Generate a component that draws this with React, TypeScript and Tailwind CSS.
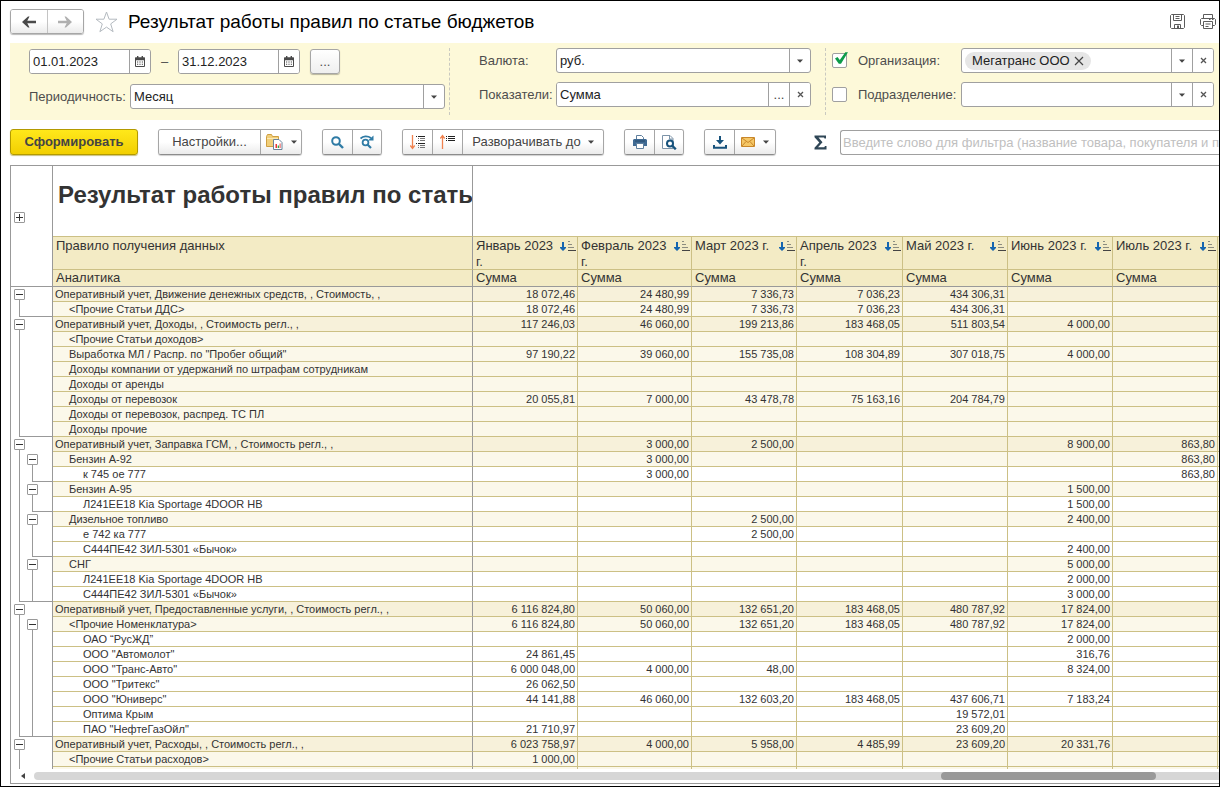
import React, { useState } from "react";

type Row = { level: 0 | 1 | 2; label: string; values: string[] };

const months = [
  "Январь 2023 г.",
  "Февраль 2023 г.",
  "Март 2023 г.",
  "Апрель 2023 г.",
  "Май 2023 г.",
  "Июнь 2023 г.",
  "Июль 2023 г.",
];

const rows: Row[] = [
  { level: 0, label: "Оперативный учет, Движение денежных средств, , Стоимость, ,", values: ["18 072,46", "24 480,99", "7 336,73", "7 036,23", "434 306,31", "", ""] },
  { level: 1, label: "<Прочие Статьи ДДС>", values: ["18 072,46", "24 480,99", "7 336,73", "7 036,23", "434 306,31", "", ""] },
  { level: 0, label: "Оперативный учет, Доходы, , Стоимость регл., ,", values: ["117 246,03", "46 060,00", "199 213,86", "183 468,05", "511 803,54", "4 000,00", ""] },
  { level: 1, label: "<Прочие Статьи доходов>", values: ["", "", "", "", "", "", ""] },
  { level: 1, label: 'Выработка МЛ / Распр. по "Пробег общий"', values: ["97 190,22", "39 060,00", "155 735,08", "108 304,89", "307 018,75", "4 000,00", ""] },
  { level: 1, label: "Доходы компании от удержаний по штрафам сотрудникам", values: ["", "", "", "", "", "", ""] },
  { level: 1, label: "Доходы от аренды", values: ["", "", "", "", "", "", ""] },
  { level: 1, label: "Доходы от перевозок", values: ["20 055,81", "7 000,00", "43 478,78", "75 163,16", "204 784,79", "", ""] },
  { level: 1, label: "Доходы от перевозок, распред. ТС ПЛ", values: ["", "", "", "", "", "", ""] },
  { level: 1, label: "Доходы прочие", values: ["", "", "", "", "", "", ""] },
  { level: 0, label: "Оперативный учет, Заправка ГСМ, , Стоимость регл., ,", values: ["", "3 000,00", "2 500,00", "", "", "8 900,00", "863,80"] },
  { level: 1, label: "Бензин А-92", values: ["", "3 000,00", "", "", "", "", "863,80"] },
  { level: 2, label: "к 745 ое 777", values: ["", "3 000,00", "", "", "", "", "863,80"] },
  { level: 1, label: "Бензин А-95", values: ["", "", "", "", "", "1 500,00", ""] },
  { level: 2, label: "Л241ЕЕ18 Kia Sportage 4DOOR HB", values: ["", "", "", "", "", "1 500,00", ""] },
  { level: 1, label: "Дизельное топливо", values: ["", "", "2 500,00", "", "", "2 400,00", ""] },
  { level: 2, label: "е 742 ка 777", values: ["", "", "2 500,00", "", "", "", ""] },
  { level: 2, label: "С444ПЕ42 ЗИЛ-5301 «Бычок»", values: ["", "", "", "", "", "2 400,00", ""] },
  { level: 1, label: "СНГ", values: ["", "", "", "", "", "5 000,00", ""] },
  { level: 2, label: "Л241ЕЕ18 Kia Sportage 4DOOR HB", values: ["", "", "", "", "", "2 000,00", ""] },
  { level: 2, label: "С444ПЕ42 ЗИЛ-5301 «Бычок»", values: ["", "", "", "", "", "3 000,00", ""] },
  { level: 0, label: "Оперативный учет, Предоставленные услуги, , Стоимость регл., ,", values: ["6 116 824,80", "50 060,00", "132 651,20", "183 468,05", "480 787,92", "17 824,00", ""] },
  { level: 1, label: "<Прочие Номенклатура>", values: ["6 116 824,80", "50 060,00", "132 651,20", "183 468,05", "480 787,92", "17 824,00", ""] },
  { level: 2, label: "ОАО “РусЖД”", values: ["", "", "", "", "", "2 000,00", ""] },
  { level: 2, label: 'ООО "Автомолот"', values: ["24 861,45", "", "", "", "", "316,76", ""] },
  { level: 2, label: 'ООО "Транс-Авто"', values: ["6 000 048,00", "4 000,00", "48,00", "", "", "8 324,00", ""] },
  { level: 2, label: 'ООО "Тритекс"', values: ["26 062,50", "", "", "", "", "", ""] },
  { level: 2, label: 'ООО "Юниверс"', values: ["44 141,88", "46 060,00", "132 603,20", "183 468,05", "437 606,71", "7 183,24", ""] },
  { level: 2, label: "Оптима Крым", values: ["", "", "", "", "19 572,01", "", ""] },
  { level: 2, label: 'ПАО "НефтеГазОйл"', values: ["21 710,97", "", "", "", "23 609,20", "", ""] },
  { level: 0, label: "Оперативный учет, Расходы, , Стоимость регл., ,", values: ["6 023 758,97", "4 000,00", "5 958,00", "4 485,99", "23 609,20", "20 331,76", ""] },
  { level: 1, label: "<Прочие Статьи расходов>", values: ["1 000,00", "", "", "", "", "", ""] },
  { level: 1, label: "", values: ["", "", "", "", "", "", ""] },
];

const rowFill = ["bg-[#f7f1da]", "bg-[#fbf8ea]", "bg-white"];
const rowIndent = ["pl-[2px]", "pl-[16px]", "pl-[30px]"];

const btn =
  "flex items-center justify-center bg-linear-to-b from-white from-50% to-[#ebebeb] text-[#444]";
const group =
  "flex h-[26px] shrink-0 divide-x divide-[#a6a6a6] overflow-hidden rounded-[3px] border border-[#a6a6a6] border-b-[#8c8c8c] shadow-[0_1px_1px_#d0d0d0]";
const field =
  "flex h-[25px] divide-x divide-[#a0a0a0] overflow-hidden rounded-[3px] border border-[#a0a0a0] bg-white";
const fieldText = "min-w-0 flex-1 bg-white px-[3px] text-[#222] outline-none";
const fieldBtn = "flex shrink-0 basis-5 items-center justify-center bg-white text-[#444]";
const fieldBtnLined = "flex shrink-0 basis-[21px] items-center justify-center bg-white text-[#444]";

function Caret() {
  return (
    <svg width="6" height="4" viewBox="0 0 6 4" aria-hidden="true">
      <path d="M0 0.5h6L3 3.8z" fill="#444" />
    </svg>
  );
}

function Cross() {
  return (
    <svg width="7" height="7" viewBox="0 0 7 7" aria-hidden="true">
      <path d="M1 1l5 5M6 1l-5 5" stroke="#555" strokeWidth="1.3" />
    </svg>
  );
}

function CalendarIcon() {
  return (
    <svg width="10" height="11" viewBox="0 0 10 11" aria-hidden="true">
      <path d="M0.5 2h9v8.5h-9z" fill="#fff" stroke="#4a4a4a" />
      <path d="M0 1.5h10v2.7H0zM2 0h1.4v2H2zM6.6 0H8v2H6.6z" fill="#4a4a4a" />
      <path d="M2 5.5h1.2v1H2zM4.4 5.5h1.2v1H4.4zM6.8 5.5H8v1H6.8zM2 7.8h1.2v1H2zM4.4 7.8h1.2v1H4.4zM6.8 7.8H8v1H6.8z" fill="#4a4a4a" />
    </svg>
  );
}

function DateField({ label, value }: { label: string; value: string }) {
  return (
    <div className={`${field} w-[122px]`}>
      <input aria-label={label} defaultValue={value} className={fieldText} />
      <button aria-label="Календарь" className={fieldBtn}>
        <CalendarIcon />
      </button>
    </div>
  );
}

function SelectField({ id, value, className }: { id: string; value: string; className: string }) {
  return (
    <div className={`relative ${className}`}>
      <select
        id={id}
        defaultValue={value}
        className="block h-[25px] w-full appearance-none rounded-[3px] border border-[#a0a0a0] bg-white pr-6 pl-[3px] text-[#222] outline-none"
      >
        <option>{value}</option>
      </select>
      <span className="pointer-events-none absolute inset-y-px right-px flex w-[21px] items-center justify-center border-l border-[#a0a0a0]">
        <Caret />
      </span>
    </div>
  );
}

function CheckField({ id, label, checked, children }: { id: string; label: string; checked: boolean; children?: React.ReactNode }) {
  const [on, setOn] = useState(checked);
  return (
    <div className="flex h-[25px] items-center">
      <span className="relative mr-[11px] size-[15px]">
        <input
          id={id}
          type="checkbox"
          checked={on}
          onChange={(e) => setOn(e.target.checked)}
          className="block size-[15px] appearance-none rounded-[2px] border border-[#a0a0a0] bg-white"
        />
        {on && (
          <svg className="pointer-events-none absolute -top-px left-[3px]" width="13" height="13" viewBox="0 0 13 13" aria-hidden="true">
            <path d="M0 6.500L2.500 5 4.800 8 10.300 0.200H13L6 11.800H3.800z" fill="#0d9b49" />
          </svg>
        )}
      </span>
      <label htmlFor={id} className="w-[103px] shrink-0">
        {label}
      </label>
      <div className={`${field} min-w-0 flex-1`}>
        <div className="flex min-w-0 flex-1 items-center">
          {children}
          <input aria-label={label} className="min-w-0 flex-1 bg-white px-[3px] outline-none" />
        </div>
        <button aria-label="Выбрать" className={fieldBtnLined}>
          <Caret />
        </button>
        <button aria-label="Очистить" className={fieldBtn}>
          <Cross />
        </button>
      </div>
    </div>
  );
}

function TreeToggle({ open, className }: { open: boolean; className: string }) {
  return (
    <button
      aria-label={open ? "Свернуть группу" : "Развернуть группу"}
      className={`absolute flex size-[11px] items-center justify-center rounded-[1px] border border-[#999] bg-white ${className}`}
    >
      <svg width="7" height="7" viewBox="0 0 7 7" aria-hidden="true">
        <path d={open ? "M0 3.5h7" : "M0 3.5h7M3.5 0v7"} stroke="#333" />
      </svg>
    </button>
  );
}

function TreeCell({ index }: { index: number }) {
  const { level } = rows[index];
  const next = rows[index + 1]?.level;
  const outerEnd = level > 0 && next === 0;
  const opensInner = level === 1 && next === 2;
  const innerEnd = level === 2 && next !== undefined && next < 2;
  return (
    <div className="relative flex h-[15px] pl-[8px]">
      <div
        className={`flex flex-1 border-l border-[#999] pl-[12px] ${level === 0 ? "mt-[8px]" : ""} ${outerEnd ? "border-b" : ""}`}
      >
        {(level === 2 || opensInner) && (
          <div
            className={`flex-1 border-l border-[#999] ${opensInner ? "mt-[8px]" : ""} ${innerEnd && !outerEnd ? "border-b" : ""}`}
          />
        )}
      </div>
      {level === 0 && <TreeToggle open className="top-[2px] left-[3px]" />}
      {opensInner && <TreeToggle open className="top-[2px] left-[16px]" />}
    </div>
  );
}

function SortIcon() {
  return (
    <svg className="mt-[3px] shrink-0" width="16" height="12" viewBox="0 0 16 12" aria-hidden="true">
      <path d="M2 2h2v5h2v1L3 11 0 8V7h2z" fill="#1565b0" />
      <path d="M8 1.5h2M8 4.5h4M8 7.5h6" stroke="#8c8c80" />
      <path d="M8 10.5h8" stroke="#444" />
    </svg>
  );
}

export default function App() {
  return (
    <div className="flex h-screen flex-col overflow-hidden border border-black bg-white pl-[9px] font-['Liberation_Sans',Arial,sans-serif] text-[13px] leading-4 text-[#4d4d4d]">
      <header className="flex h-[42px] shrink-0 items-center pr-[3px] pb-px">
        <div className="flex h-[25px] w-[74px] divide-x divide-[#c4c4c4] overflow-hidden rounded-[3px] border border-[#a6a6a6] shadow-[0_1px_1px_#bbb]">
          <button aria-label="Назад" className={`${btn} flex-1`}>
            <svg width="14" height="12" viewBox="0 0 14 12" aria-hidden="true">
              <path d="M0 6l6-5.5h1.5L5.3 4.8H14v2.4H5.3l2.2 4.3H6z" fill="#4a4a4a" />
            </svg>
          </button>
          <button aria-label="Вперед" className={`${btn} flex-1`}>
            <svg width="14" height="12" viewBox="0 0 14 12" aria-hidden="true">
              <path d="M14 6L8 0.5H6.500l2.200 4.300H0v2.400h8.700l-2.200 4.300H8z" fill="#b0b0b0" />
            </svg>
          </button>
        </div>
        <button aria-label="В избранное" className="ml-[11px]">
          <svg width="23" height="22" viewBox="0 0 23 22" aria-hidden="true">
            <path d="M11.500 1l2.600 7.200h7.900l-6.300 4.700 2.400 7.800-6.600-4.600-6.600 4.600 2.400-7.800L1 8.200h7.900z" fill="#fff" stroke="#b4bac0" />
          </svg>
        </button>
        <h1 className="ml-[10px] flex-1 truncate text-[19px] leading-6 text-black">
          Результат работы правил по статье бюджетов
        </h1>
        <button aria-label="Сохранить">
          <svg width="15" height="15" viewBox="0 0 15 15" fill="none" stroke="#5c5c5c" aria-hidden="true">
            <path d="M0.500 1.500v12l1 1h12l1-1v-12l-1-1h-12z" />
            <path d="M3.500 0.500v6h8v-6M5.500 2.500h4M5.500 4.500h4M4.500 14v-3.500h6V14" />
            <path d="M7 11.500h2V14H7z" fill="#5c5c5c" stroke="none" />
          </svg>
        </button>
        <button aria-label="Печать" className="ml-[15px]">
          <svg width="16" height="15" viewBox="0 0 16 15" fill="none" stroke="#5c5c5c" aria-hidden="true">
            <path d="M3.500 4V0.500h9V4M3.500 11.500h-2l-1-1v-5l1-1h13l1 1v5l-1 1h-2" />
            <path d="M3.500 7.500h9v7h-9zM5.500 10h5M5.500 12.500h3M9 5.500h1.500M12 5.500h1.500" />
          </svg>
        </button>
      </header>

      <section className="flex h-[77px] shrink-0 bg-[#fdf9d9]">
        <div className="flex w-[439px] shrink-0 flex-col gap-[10px] pt-[6px] pl-[19px]">
          <div className="flex items-center">
            <DateField label="Начало периода" value="01.01.2023" />
            <span className="w-[27px] text-center">–</span>
            <DateField label="Конец периода" value="31.12.2023" />
            <button aria-label="Выбрать период" className="ml-[10px] flex h-[25px] w-[30px] items-center justify-center rounded-[3px] border border-[#a6a6a6] bg-linear-to-b from-white to-[#efefef] shadow-[0_1px_1px_#b8b59c]">
              ...
            </button>
          </div>
          <div className="flex items-center">
            <label htmlFor="period" className="w-[101px]">Периодичность:</label>
            <SelectField id="period" value="Месяц" className="w-[315px]" />
          </div>
        </div>

        <div className="my-[5px] flex w-[376px] shrink-0 flex-col gap-[9px] border-l border-dashed border-[#c9c9c0] pl-[29px]">
          <div className="flex items-center">
            <label htmlFor="currency" className="w-[77px]">Валюта:</label>
            <SelectField id="currency" value="руб." className="w-[255px]" />
          </div>
          <div className="flex items-center">
            <label htmlFor="measures" className="w-[77px]">Показатели:</label>
            <div className={`${field} w-[255px]`}>
              <input id="measures" defaultValue="Сумма" className={fieldText} />
              <button aria-label="Подобрать" className={fieldBtnLined}>...</button>
              <button aria-label="Очистить" className={fieldBtn}>
                <Cross />
              </button>
            </div>
          </div>
        </div>

        <div className="my-[5px] flex min-w-0 flex-1 flex-col gap-[9px] border-l border-dashed border-[#c9c9c0] pr-[5px] pl-[6px]">
          <CheckField id="org" label="Организация:" checked>
            <span className="ml-[3px] flex h-[18px] shrink-0 items-center gap-[4px] rounded-full bg-[#e6e6e6] px-[7px] text-[#222]">
              Мегатранс ООО
              <button aria-label="Убрать">
                <svg width="10" height="10" viewBox="0 0 10 10" aria-hidden="true">
                  <path d="M1 1l8 8M9 1L1 9" stroke="#444" strokeWidth="1.200" />
                </svg>
              </button>
            </span>
          </CheckField>
          <CheckField id="dept" label="Подразделение:" checked={false} />
        </div>
      </section>

      <div className="flex h-[45px] shrink-0 items-center gap-[20px] pb-px">
        <button className="h-[26px] w-[128px] shrink-0 rounded-[3px] border border-[#b39a00] bg-linear-to-b from-[#ffe81a] to-[#f2cf00] font-bold text-[#444] shadow-[0_1px_1px_#c9c080]">
          Сформировать
        </button>

        <div className={group}>
          <button className={`${btn} w-[102px]`}>Настройки...</button>
          <button aria-label="Варианты отчета" className={`${btn} w-[40px] gap-[8px]`}>
            <svg width="17" height="16" viewBox="0 0 17 16" aria-hidden="true">
              <path d="M0.500 12.500v-10l1-2h4l1 2h6v10z" fill="#f1cf7a" stroke="#cf9f42" />
              <path d="M1 4.500h11" stroke="#fbe9b5" />
              <path d="M7.500 5.500h5.500l3 3v7H7.500z" fill="#fff" stroke="#6b8299" />
              <path d="M9.500 10h1.500v4H9.500z" fill="#e33" />
              <path d="M11.700 11.500h1.300V14h-1.300z" fill="#3a4" />
              <path d="M13.500 9.500h1.200V14h-1.200z" fill="#e66" />
            </svg>
            <Caret />
          </button>
        </div>

        <div className={group}>
          <button aria-label="Найти" className={`${btn} w-[30px]`}>
            <svg width="13" height="13" viewBox="0 0 13 13" fill="none" stroke="#2f7ba5" aria-hidden="true">
              <circle cx="5" cy="5" r="3.800" strokeWidth="2" />
              <path d="M8 8l4 4" strokeWidth="2.400" />
            </svg>
          </button>
          <button aria-label="Найти далее" className={`${btn} w-[28px]`}>
            <svg width="14" height="14" viewBox="0 0 14 14" fill="none" stroke="#2f7ba5" aria-hidden="true">
              <circle cx="5.500" cy="7.500" r="2.900" strokeWidth="1.800" />
              <path d="M7.500 9.500l3.500 3.500" strokeWidth="2.200" />
              <path d="M0.500 3.500C3 1 7.500 0.500 11 3" strokeWidth="1.800" />
              <path d="M13.500 0.500v5H8z" fill="#2f7ba5" stroke="none" />
            </svg>
          </button>
        </div>

        <div className={group}>
          <button aria-label="Развернуть все" className={`${btn} w-[30px]`}>
            <svg width="16" height="16" viewBox="0 0 16 16" fill="none" aria-hidden="true">
              <path d="M2.500 1v13M0.300 11.500l2.200 3 2.200-3" stroke="#f0824f" strokeWidth="1.300" />
              <path d="M6 2.500h1M8 2.500h7M6 9.500h1M8 9.500h7" stroke="#222" />
              <path d="M8 4.500h1M10 4.500h5M8 6.500h1M10 6.500h5M8 11.500h1M10 11.500h5M8 13.500h1M10 13.500h5" stroke="#777" />
            </svg>
          </button>
          <button aria-label="Свернуть все" className={`${btn} w-[30px]`}>
            <svg width="16" height="16" viewBox="0 0 16 16" fill="none" aria-hidden="true">
              <path d="M2.500 15V2M0.300 4.500l2.200-3 2.200 3" stroke="#f0824f" strokeWidth="1.300" />
              <path d="M6 2.500h1M8 2.500h7M6 4.500h1M8 4.500h7M6 6.500h1M8 6.500h7" stroke="#222" />
            </svg>
          </button>
          <button className={`${btn} w-[140px] gap-[7px]`}>
            Разворачивать до
            <Caret />
          </button>
        </div>

        <div className={group}>
          <button aria-label="Печать отчета" className={`${btn} w-[30px]`}>
            <svg width="14" height="14" viewBox="0 0 14 14" aria-hidden="true">
              <path d="M3.500 5V0.500h5l2 2V5" fill="#fff" stroke="#5f7f9d" />
              <path d="M1 4h12l1 1v6H0V5z" fill="#3f6a93" />
              <path d="M2 6h10" stroke="#26486b" />
              <path d="M3.500 8.500h7v5h-7z" fill="#fff" stroke="#5f7f9d" />
            </svg>
          </button>
          <button aria-label="Предварительный просмотр" className={`${btn} w-[28px]`}>
            <svg width="15" height="15" viewBox="0 0 15 15" fill="none" aria-hidden="true">
              <path d="M0.500 0.500h7.500l3 3v10H0.500z" fill="#fff" stroke="#7c93a8" />
              <path d="M7.500 0.500V4H11" stroke="#7c93a8" />
              <circle cx="8" cy="8.500" r="3" fill="#fff" stroke="#17527c" strokeWidth="2" />
              <path d="M10 10.500l3.800 3.800" stroke="#17527c" strokeWidth="2.400" />
            </svg>
          </button>
        </div>

        <div className={group}>
          <button aria-label="Сохранить отчет" className={`${btn} w-[30px]`}>
            <svg width="14" height="13" viewBox="0 0 14 13" aria-hidden="true">
              <path d="M6 0h2v4h3L7 8.500 3 4h3z" fill="#17527c" />
              <path d="M1 9v2.800h12V9" fill="none" stroke="#17527c" strokeWidth="2" />
            </svg>
          </button>
          <button aria-label="Отправить" className={`${btn} w-[40px] gap-[8px]`}>
            <svg width="14" height="10" viewBox="0 0 14 10" aria-hidden="true">
              <path d="M0.500 0.500h13v9H0.500z" fill="#f5c766" stroke="#c8872a" />
              <path d="M1 1l6 4.500L13 1M1 9l4-4.500M13 9L9 4.500" fill="none" stroke="#c8872a" />
            </svg>
            <Caret />
          </button>
        </div>

        <div className="flex min-w-0 flex-1 items-center gap-[13px] pl-[18px]">
          <button aria-label="Сумма выделенных ячеек" className="shrink-0">
            <svg width="13" height="15" viewBox="0 0 13 15" aria-hidden="true">
              <path d="M0.500 0.500H12v3h-1.500L10 2.500H4.500L8.500 7.200 4 12.300h6.300l0.700-1.300h1.500v3.500H0.500v-1.800L5.300 7.500 0.500 2.200z" fill="#2f4656" />
            </svg>
          </button>
          <input
            aria-label="Фильтр"
            placeholder="Введите слово для фильтра (название товара, покупателя и пр.)"
            className="h-[25px] min-w-0 flex-1 rounded-l-[3px] border border-r-0 border-[#a0a0a0] pl-[2px] outline-none placeholder:text-[#c0c0c0]"
          />
        </div>
      </div>

      <main className="mb-[2px] flex min-h-0 flex-1 flex-col border-y border-l border-[#999]">
        <div className="min-h-0 flex-1 overflow-hidden">
          <table className="w-full min-w-[1208px] table-fixed border-separate border-spacing-0 text-[#333]">
            <colgroup>
              <col className="w-[42px]" />
              <col className="w-[420px]" />
              <col className="w-[105px]" />
              <col className="w-[114px]" />
              <col className="w-[105px]" />
              <col className="w-[106px]" />
              <col className="w-[105px]" />
              <col className="w-[105px]" />
              <col className="w-[105px]" />
              <col />
            </colgroup>
            <thead className="text-left">
              <tr className="h-[71px]">
                <td rowSpan={3} className="relative border-r border-b border-[#999]">
                  <TreeToggle open={false} className="top-[46px] left-[3px]" />
                </td>
                <th className="overflow-hidden border-r border-b border-r-[#999] border-b-[#ccc085] pb-[12px] pl-[5px] text-[24px] leading-7 font-bold whitespace-nowrap">
                  Результат работы правил по статье бюджетов
                </th>
                <td colSpan={8} className="border-b border-[#ccc085]" />
              </tr>
              <tr className="h-[33px] bg-[#f3ebc5] align-top">
                <th className="border-r border-b border-r-[#999] border-b-[#ccc085] pt-px pl-[3px] font-normal">
                  Правило получения данных
                </th>
                {months.map((m) => (
                  <th key={m} className="border-r border-b border-[#ccc085] pl-[3px] font-normal">
                    <div className="flex h-[32px] justify-between pr-px">
                      <span className="pt-px leading-4">{m}</span>
                      <SortIcon />
                    </div>
                  </th>
                ))}
                <th className="border-b border-[#ccc085]" />
              </tr>
              <tr className="h-[17px] bg-[#f3ebc5]">
                <th className="border-r border-b border-[#999] pl-[3px] font-normal">Аналитика</th>
                {months.map((m) => (
                  <th key={m} className="border-r border-b border-r-[#ccc085] border-b-[#999] pl-[3px] font-normal">
                    Сумма
                  </th>
                ))}
                <th className="border-b border-[#999]" />
              </tr>
            </thead>
            <tbody className="text-[11px] leading-[14px]">
              {rows.map((row, i) => (
                <tr key={i} className={`h-[15px] ${rowFill[row.level]}`}>
                  <td className="border-r border-[#999] bg-white p-0">
                    <TreeCell index={i} />
                  </td>
                  <td className={`border-r border-b border-r-[#999] border-b-[#ccc085] whitespace-nowrap ${rowIndent[row.level]}`}>
                    {row.label}
                  </td>
                  {row.values.map((v, c) => (
                    <td key={c} className="border-r border-b border-[#ccc085] pr-[2px] text-right whitespace-nowrap">
                      {v}
                    </td>
                  ))}
                  <td className="border-b border-[#ccc085]" />
                </tr>
              ))}
            </tbody>
          </table>
        </div>
        <div className="flex h-[14px] shrink-0 items-center">
          <button aria-label="Прокрутить влево" className="flex w-[23px] justify-center">
            <svg width="4" height="6" viewBox="0 0 4 6" aria-hidden="true">
              <path d="M4 0v6L0 3z" fill="#444" />
            </svg>
          </button>
          <div className="flex h-[8px] flex-1 rounded-l-full bg-[#d6d6d6]">
            <div className="ml-[76.500%] w-[18.200%] rounded-full bg-[#999]" />
          </div>
        </div>
      </main>
    </div>
  );
}
